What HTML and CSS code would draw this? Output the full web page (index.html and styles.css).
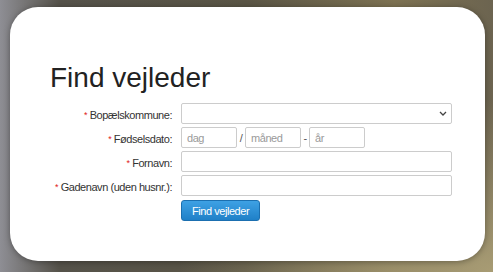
FILE: index.html
```html
<!DOCTYPE html>
<html lang="da">

<head>
    <meta charset="UTF-8" />
    <meta name="viewport" content="width=device-width, initial-scale=1.0" />
    <title>Find vejleder</title>
    <link rel="stylesheet" href="styles.css">
</head>

<body>
    <div class="card">
        <h1>Find vejleder</h1>

        <!-- Søgeformular -->
        <form class="search-form">
            <label class="label"><span class="req">*</span> Bopælskommune:</label>
            <div class="field select-wrap">
                <select class="input select">
                    <option></option>
                </select>
                <svg class="chevron" width="8" height="5" viewBox="0 0 8 5">
                    <path d="M1 1 L4 4 L7 1" fill="none" stroke="#444" stroke-width="1.3" />
                </svg>
            </div>

            <label class="label"><span class="req">*</span> Fødselsdato:</label>
            <div class="field date-row">
                <input class="input small" type="text" placeholder="dag">
                <span class="sep">/</span>
                <input class="input small" type="text" placeholder="måned">
                <span class="sep">-</span>
                <input class="input small" type="text" placeholder="år">
            </div>

            <label class="label"><span class="req">*</span> Fornavn:</label>
            <div class="field">
                <input class="input" type="text">
            </div>

            <label class="label"><span class="req">*</span> Gadenavn (uden husnr.):</label>
            <div class="field">
                <input class="input" type="text">
            </div>

            <div></div>
            <div class="field">
                <button type="button" class="btn">Find vejleder</button>
            </div>
        </form>
    </div>
</body>

</html>
```

FILE: styles.css
```css
body {
    margin: 0;
    height: 272px;
    overflow: hidden;
    font-family: 'Liberation Sans', Arial, sans-serif;
    background:
        radial-gradient(ellipse at 100% 100%, #a89c74 0%, rgba(168, 156, 116, 0) 45%),
        linear-gradient(90deg, #8e8e94 0%, #55524a 12%, #5a5545 50%, #7d7252 80%, #6c6450 100%);
    padding: 7px 8px 0 10px;
    box-sizing: border-box;
}

.card {
    background: #fff;
    height: 254px;
    border-radius: 28px;
    padding: 55px 30px 0 40px;
    box-sizing: border-box;
    box-shadow: 0 1px 6px rgba(0, 0, 0, 0.35);
}

h1 {
    margin: 0 0 9px 0;
    font-size: 28px;
    line-height: 32px;
    font-weight: normal;
    color: #222;
}

.search-form {
    display: grid;
    grid-template-columns: 122px 271px;
    column-gap: 9px;
    row-gap: 3px;
    align-items: center;
}

/* lidt tættere skrift, som i skærmbilledet */
.label,
.input,
.sep,
.btn {
    font-family: 'Liberation Sans', Arial, sans-serif;
    font-size: 11px;
    letter-spacing: -0.45px;
}

.label {
    text-align: right;
    white-space: nowrap;
    color: #333;
    padding-top: 2px;
}

.req {
    color: #e02020;
    font-size: 9px;
    vertical-align: 1px;
}

.field {
    display: flex;
    align-items: center;
}

.input {
    width: 100%;
    height: 21px;
    box-sizing: border-box;
    border: 1px solid #ccc;
    border-radius: 2px;
    padding: 0 5px;
    color: #333;
    background: #fff;
}

.input::placeholder {
    color: #9a9a9a;
}

.select-wrap {
    position: relative;
}

.select {
    appearance: none;
    -webkit-appearance: none;
}

.chevron {
    position: absolute;
    right: 5px;
    top: 8px;
    pointer-events: none;
}

.date-row .small {
    width: 56px;
}

.sep {
    width: 8px;
    text-align: center;
    color: #555;
}

.btn {
    margin-top: 1px;
    height: 21px;
    padding: 0 10px;
    border: 1px solid #1b6fb0;
    border-radius: 3px;
    background: linear-gradient(#3ea1e4, #1f80c8);
    color: #fff;
}
```
